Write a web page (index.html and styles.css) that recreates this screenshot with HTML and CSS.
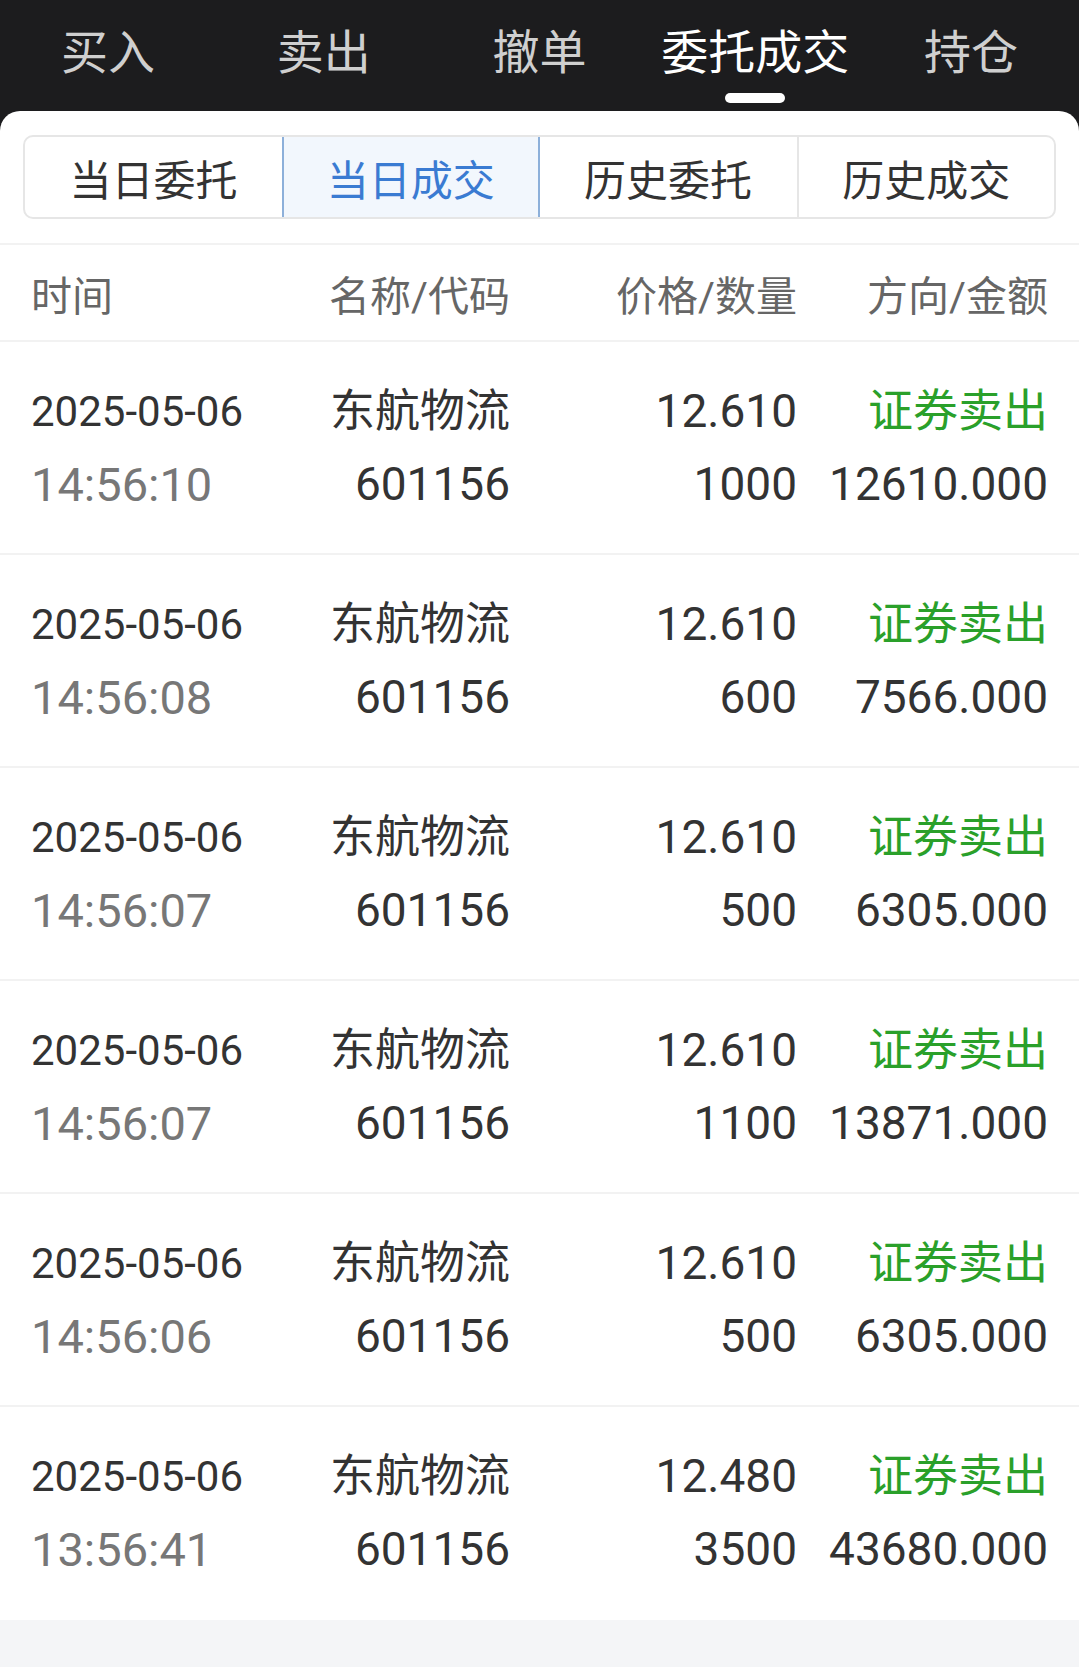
FILE: index.html
```html
<!DOCTYPE html>
<html lang="zh-CN">
<head>
    <meta charset="UTF-8">
    <meta name="viewport" content="width=device-width, initial-scale=1.0">
    <title>委托成交</title>
    <link rel="stylesheet" href="styles.css">
</head>
<body>
    <div class="top-tabs">
        <div class="tab">买入</div>
        <div class="tab">卖出</div>
        <div class="tab">撤单</div>
        <div class="tab active">委托成交</div>
        <div class="tab">持仓</div>
    </div>

    <div class="card">
        <div class="segment-wrap">
            <div class="segments">
                <div class="seg">当日委托</div>
                <div class="seg active">当日成交</div>
                <div class="seg">历史委托</div>
                <div class="seg">历史成交</div>
            </div>
        </div>

        <div class="head-row">
            <div>时间</div>
            <div class="r">名称/代码</div>
            <div class="r">价格/数量</div>
            <div class="r">方向/金额</div>
        </div>

        <div class="rows" id="rows">
            <!-- rows filled by script -->
        </div>
    </div>
    <div class="footer-space"></div>

    <script>
        const deals = [
            ['14:56:10', '12.610', '1000', '12610.000'],
            ['14:56:08', '12.610', '600', '7566.000'],
            ['14:56:07', '12.610', '500', '6305.000'],
            ['14:56:07', '12.610', '1100', '13871.000'],
            ['14:56:06', '12.610', '500', '6305.000'],
            ['13:56:41', '12.480', '3500', '43680.000']
        ];

        const rows = document.getElementById('rows');
        deals.forEach(d => {
            const row = document.createElement('div');
            row.className = 'deal-row';
            row.innerHTML = `
                <div class="cell">
                    <div class="date">2025-05-06</div>
                    <div class="time">${d[0]}</div>
                </div>
                <div class="cell r">
                    <div class="name">东航物流</div>
                    <div class="num">601156</div>
                </div>
                <div class="cell r">
                    <div class="num">${d[1]}</div>
                    <div class="num">${d[2]}</div>
                </div>
                <div class="cell r">
                    <div class="dir">证券卖出</div>
                    <div class="num">${d[3]}</div>
                </div>`;
            rows.appendChild(row);
        });
    </script>
</body>
</html>
```

FILE: styles.css
```css
* {
    box-sizing: border-box;
}
body {
    margin: 0;
    padding: 0;
    font-family: Roboto, "Noto Sans CJK SC", sans-serif;
    background-color: #1c1c1e;
    color: #333;
}
.top-tabs {
    display: grid;
    grid-template-columns: repeat(5, 1fr);
    height: 111px;
    background: #1c1c1e;
}
.tab {
    position: relative;
    text-align: center;
    font-size: 47px;
    line-height: 106px;
    color: #cfcfcf;
}
.tab.active {
    color: #fff;
}
.tab.active::after {
    content: '';
    position: absolute;
    left: 50%;
    bottom: 8px;
    width: 60px;
    height: 10px;
    margin-left: -30px;
    border-radius: 5px;
    background: #fff;
}
.card {
    background: #fff;
    border-radius: 20px 20px 0 0;
}
.segment-wrap {
    padding: 24px 23px 24px 23px;
    border-bottom: 2px solid #f2f2f2;
}
.segments {
    display: grid;
    grid-template-columns: repeat(4, 1fr);
    height: 84px;
    border: 2px solid #e6e6e6;
    border-radius: 10px;
    overflow: hidden;
}
.seg {
    display: flex;
    align-items: center;
    justify-content: center;
    font-size: 42px;
    color: #333;
    border-left: 2px solid #e6e6e6;
}
.seg:first-child {
    border-left: none;
}
.seg.active {
    background: #f2f7fd;
    color: #3a7bd2;
    border: 2px solid #8db0da;
    margin: -2px 0;
}
.seg.active + .seg {
    border-left: none;
}
.head-row,
.deal-row {
    display: grid;
    grid-template-columns: 260px 219px 287px 251px;
    padding: 0 31px;
}
.head-row {
    height: 97px;
    align-items: center;
    font-size: 41px;
    color: #666;
    border-bottom: 2px solid #f2f2f2;
}
.r {
    text-align: right;
}
.deal-row {
    height: 213px;
    padding-top: 33px;
    border-bottom: 2px solid #f2f2f2;
}
.deal-row:last-child {
    border-bottom: none;
}
.cell > div {
    height: 73px;
    line-height: 73px;
    white-space: nowrap;
}
.date {
    font-size: 42px;
    color: #333;
}
.time {
    font-size: 47px;
    color: #777;
}
.name {
    font-size: 45px;
    color: #333;
}
.num {
    font-size: 46px;
    color: #333;
}
.dir {
    font-size: 45px;
    color: #2aa02a;
}
.footer-space {
    height: 60px;
    background: #f4f5f7;
}
```
